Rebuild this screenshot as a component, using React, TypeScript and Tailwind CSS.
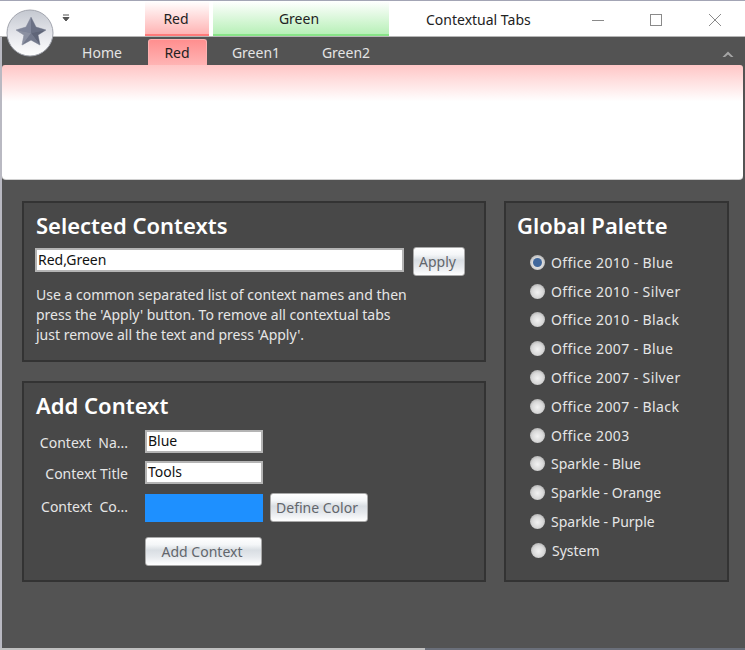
const palettes = [
  'Office 2010 - Blue',
  'Office 2010 - Silver',
  'Office 2010 - Black',
  'Office 2007 - Blue',
  'Office 2007 - Silver',
  'Office 2007 - Black',
  'Office 2003',
  'Sparkle - Blue',
  'Sparkle - Orange',
  'Sparkle - Purple',
]

const AppButton = ({ label, className }: { label: string; className: string }) => (
  <div
    className={`flex items-center justify-center rounded-[3px] border border-[#a9a9a9] bg-[linear-gradient(180deg,#ffffff_0%,#f4f6f8_25%,#d9dee3_45%,#e6e9ed_70%,#ffffff_100%)] pr-[3px] text-[14px] text-[#62666c] ${className}`}
  >
    {label}
  </div>
)

const TextBox = ({ value, className }: { value: string; className: string }) => (
  <div className={`flex items-center border-2 border-[#b4b4b4] bg-white pb-[2px] pl-[1px] text-[14px] text-[#111111] ${className}`}>
    {value}
  </div>
)

const Radio = ({ label, checked, shift }: { label: string; checked?: boolean; shift?: boolean }) => (
  <div className={`flex h-[28.8px] items-center gap-[6px] ${shift ? 'pl-[1px]' : ''}`}>
    <div className="flex h-[15px] w-[15px] items-center justify-center rounded-full bg-[radial-gradient(circle_at_50%_55%,#f2f2f2_0%,#d8d8d8_50%,#8f8f8f_100%)]">
      {checked && <div className="h-[9px] w-[9px] rounded-full bg-[#41689c]" />}
    </div>
    <span className={`text-[14px] text-[#e6e6e6] ${label.startsWith('Office') ? 'tracking-[0.38px]' : ''}`}>{label}</span>
  </div>
)

const FieldLabel = ({ text, className = '' }: { text: string; className?: string }) => (
  <div className={`w-[92px] shrink-0 whitespace-pre text-right text-[14px] text-[#e6e6e6] ${className}`}>{text}</div>
)

const Logo = () => (
  <svg className="absolute left-[6px] top-[9px]" width="48" height="48" viewBox="0 0 48 48">
    <defs>
      <linearGradient id="orb" x1="0" y1="0" x2="0" y2="1">
        <stop offset="0" stopColor="#c4c8d0" />
        <stop offset="0.55" stopColor="#e6e7ec" />
        <stop offset="1" stopColor="#ffffff" />
      </linearGradient>
    </defs>
    <circle cx="24" cy="24" r="23" fill="url(#orb)" stroke="#a2a5ae" strokeWidth="1" />
    <polygon
      points="25,8 30,18 40,21 32,26 34,36 25,31 16,36 18,26 10,21 20,18"
      fill="#7a8092"
      stroke="#aeb2bd"
      strokeWidth="1"
    />
    <path d="M25 24L25 8L30 18L40 21z" fill="#6a7084" />
    <path d="M25 24L40 21L32 26L34 36z" fill="#5f6578" />
    <path d="M25 24L34 36L25 31L16 36z" fill="#73798c" />
    <path d="M25 24L16 36L18 26L10 21z" fill="#8b90a1" />
    <path d="M25 24L10 21L20 18L25 8z" fill="#80869a" />
  </svg>
)

export default function App() {
  return (
    <div className="relative flex h-[650px] w-[745px] flex-col overflow-hidden bg-[#535353] font-['Noto_Sans',sans-serif]">
      {/* title bar */}
      <div className="flex h-[37px] shrink-0 border-t border-b border-t-[#a3a5b5] border-b-[#b5b5b5] bg-white pl-[145px] text-[14px] text-[#222222]">
        <div className="flex h-full w-[64px] items-center justify-center border-b-2 border-[#ff7a7a] bg-[linear-gradient(180deg,#ffffff_0%,#ffb4b4_100%)] pr-[2px] pt-[2px]">
          Red
        </div>
        <div className="ml-[4px] flex h-full w-[176px] items-center justify-center border-b-2 border-[#88e488] bg-[linear-gradient(180deg,#ffffff_0%,#b8f0b8_100%)] pr-[4px] pt-[2px]">
          Green
        </div>
        <div className="ml-[37px] flex h-full items-center pt-[2px]">Contextual Tabs</div>
        <div className="ml-[60px] flex h-full items-center pt-[2px]">
          <svg width="14" height="14" viewBox="0 0 14 14">
            <path d="M1 7.5h12" stroke="#8a8a8a" strokeWidth="1" />
          </svg>
          <svg width="14" height="14" viewBox="0 0 14 14" className="ml-[44px]">
            <rect x="1.5" y="1.5" width="11" height="11" fill="none" stroke="#8a8a8a" strokeWidth="1" />
          </svg>
          <svg width="14" height="14" viewBox="0 0 14 14" className="ml-[45px]">
            <path d="M1 1l12 12M13 1L1 13" stroke="#8a8a8a" strokeWidth="1" />
          </svg>
        </div>
      </div>

      {/* ribbon tab row */}
      <div className="flex h-[28px] shrink-0 items-end bg-[#535353] pl-[80px] pr-[11px] text-[14px] text-[#e4e4e4]">
        <div className="flex h-[25px] w-[44px] items-center justify-center">Home</div>
        <div className="ml-[24px] flex h-[26px] w-[59px] items-center justify-center rounded-t-[3px] border border-b-0 border-[#ffb0b0] bg-[linear-gradient(180deg,#ff8f8f_0%,#ffb4b4_100%)] pr-[1px] text-[#222222]">
          Red
        </div>
        <div className="ml-[26px] flex h-[25px] w-[46px] items-center justify-center">Green1</div>
        <div className="ml-[44px] flex h-[25px] w-[46px] items-center justify-center">Green2</div>
        <svg className="ml-auto mb-[7px]" width="12" height="8" viewBox="0 0 12 8">
          <path d="M0.5 7L6 1.5 11.5 7 9 7 6 4.5 3 7z" fill="#a5a5a5" />
        </svg>
      </div>

      {/* ribbon group area */}
      <div className="mx-[2px] h-[115px] shrink-0 rounded-t-[3px] rounded-b-[4px] border-b border-[#d0d0d0] bg-[linear-gradient(180deg,#ffc6c6_0%,#ffffff_32%,#ffffff_100%)]" />

      {/* content */}
      <div className="flex flex-1 gap-[18px] pl-[22px] pt-[21px]">
        <div className="flex w-[464px] flex-col gap-[19px]">
          <section className="h-[161px] border-2 border-[#333333] bg-[#484848] pl-[12px] pt-[7px]">
            <h2 className="text-[22px] leading-[30px] font-semibold text-white">Selected Contexts</h2>
            <div className="-ml-[1px] mt-[7px] flex items-start">
              <TextBox value="Red,Green" className="mt-[1px] h-[24px] w-[369px]" />
              <AppButton label="Apply" className="ml-[9px] h-[29px] w-[52px]" />
            </div>
            <p className="mt-[9px] w-[380px] text-[14px] leading-[20px] text-[#e6e6e6]">
              Use a common separated list of context names and then press the 'Apply' button. To remove all contextual tabs just remove all the text and press 'Apply'.
            </p>
          </section>

          <section className="h-[201px] border-2 border-[#333333] bg-[#484848] pl-[12px] pt-[7px]">
            <h2 className="text-[22px] leading-[30px] font-semibold text-white">Add Context</h2>
            <div className="mt-[10px] flex items-center">
              <FieldLabel text="Context  Na..." className="pt-[2px]" />
              <TextBox value="Blue" className="ml-[17px] h-[23px] w-[118px]" />
            </div>
            <div className="mt-[8px] flex items-center">
              <FieldLabel text="Context Title" className="pt-[2px]" />
              <TextBox value="Tools" className="ml-[17px] h-[23px] w-[118px]" />
            </div>
            <div className="mt-[9px] flex items-center">
              <FieldLabel text="Context  Co..." className="pb-[2px]" />
              <div className="ml-[17px] h-[28px] w-[118px] bg-[#1e90ff]" />
              <AppButton label="Define Color" className="ml-[7px] h-[29px] w-[98px] pr-[4px]" />
            </div>
            <AppButton label="Add Context" className="ml-[109px] mt-[15px] h-[29px] w-[117px]" />
          </section>
        </div>

        <section className="h-[381px] w-[225px] border-2 border-[#333333] bg-[#484848] pl-[11px] pt-[7px]">
          <h2 className="text-[22px] leading-[30px] font-semibold text-white">Global Palette</h2>
          <div className="mt-[8px] pl-[13px]">
            {palettes.map((name, i) => (
              <Radio key={name} label={name} checked={i === 0} />
            ))}
            <Radio label="System" shift />
          </div>
        </section>
      </div>

      <div className="absolute bottom-0 left-0 top-[37px] w-[2px] bg-[#b9b9c2]" />
      <div className="absolute bottom-0 left-0 h-[2px] w-[425px] bg-[#c0c0c0]" />
      <div className="absolute bottom-0 left-[425px] h-[2px] w-[320px] bg-[#6a6f7a]" />
      <Logo />
      <svg className="absolute left-[62px] top-[14px]" width="8" height="9" viewBox="0 0 8 9">
        <path d="M1 1h6M1 3.5h6L4 7z" stroke="#555555" strokeWidth="1" fill="#555555" />
      </svg>
    </div>
  )
}
